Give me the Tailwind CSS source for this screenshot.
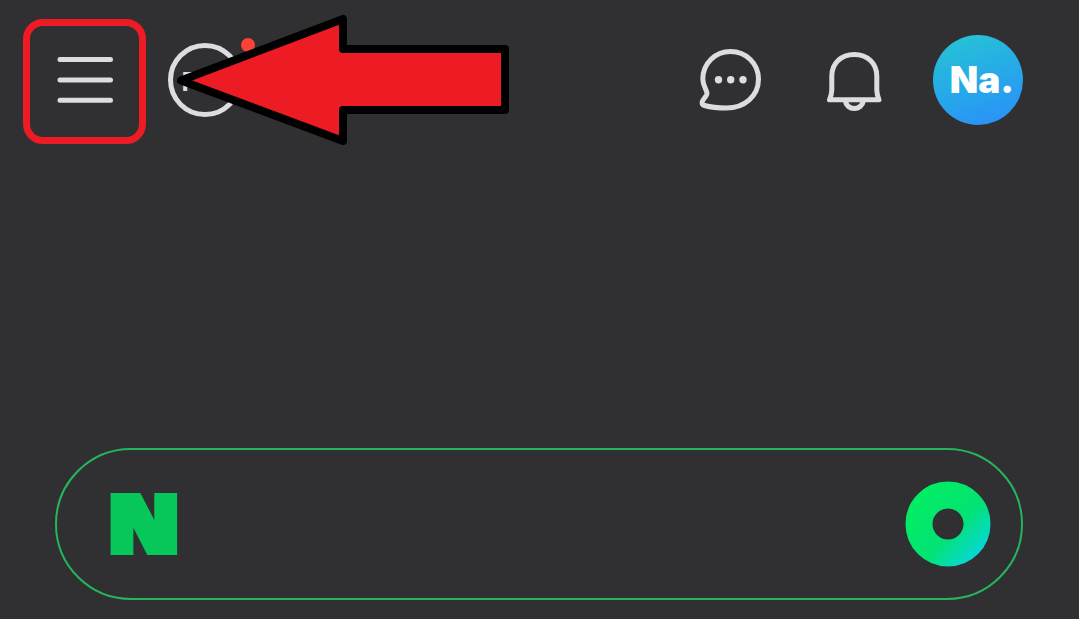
<!DOCTYPE html>
<html lang="ko">
<head>
    <meta charset="UTF-8">
    <meta name="viewport" content="width=device-width, initial-scale=1">
    <title>Naver</title>
    <script src="https://cdn.jsdelivr.net/npm/@tailwindcss/browser@4"></script>
</head>
<body class="min-h-screen bg-[#303032] text-[#dcdde0] font-[Inter,sans-serif]">
    <div class="relative flex flex-col">
        <!-- Header -->
        <header class="flex items-center justify-between pt-[19px] pl-[23px] pr-14">
            <div class="flex items-center gap-[22px]">
                <button type="button" aria-label="Menu" class="flex h-[125px] w-[123px] items-center justify-center rounded-[20px] border-7 border-[#ed1c24]">
                    <svg class="h-13 w-[58px]" viewBox="0 0 58 52" fill="none" stroke="currentColor" stroke-width="5" stroke-linecap="round">
                        <path d="M4 3.500 H54.500 M4 24 H54.500 M4 44.300 H54.500"></path>
                    </svg>
                </button>
                <button type="button" aria-label="Pay" class="relative mb-1 flex size-[74px] items-center justify-center rounded-full border-5 border-current">
                    <span class="pt-1 text-[26px] leading-8 font-bold">Pay</span>
                    <span class="absolute -top-2.5 -right-4.5 size-3.5 rounded-full bg-[#fc4237]"></span>
                </button>
            </div>

            <div class="flex items-center pb-1">
                <button type="button" aria-label="Talk" class="mr-16">
                    <svg class="size-16" viewBox="0 0 64 64" fill="none" stroke="currentColor" stroke-width="5" stroke-linejoin="round">
                        <path d="M32.500 3.500 C48 3.500 60.500 15.500 60.500 31 C60.500 48.500 46 60 28.500 60 C20 60 12 59 6.500 57.500 C4 56.800 3.500 55 4.500 53 C6 50 9 48 9 45.500 C9 42 4.800 38 4.800 31 C4.800 15.500 17 3.500 32.500 3.500 Z"></path>
                        <g fill="currentColor" stroke="none">
                            <circle cx="20.500" cy="31.700" r="3.700"></circle>
                            <circle cx="32.700" cy="31.700" r="3.700"></circle>
                            <circle cx="45" cy="31.700" r="3.700"></circle>
                        </g>
                    </svg>
                </button>
                <button type="button" aria-label="Notifications" class="mr-[51px]">
                    <svg class="h-16 w-14" viewBox="0 0 56 64" fill="none" stroke="currentColor" stroke-width="5" stroke-linejoin="round">
                        <path d="M28.300 6.500 C15 6.500 5.800 15.500 5.800 28 V42 C5.800 46 4.800 48.500 3.500 51.800 H53 C51.800 48.500 50.800 46 50.800 42 V28 C50.800 15.500 41.500 6.500 28.300 6.500 Z"></path>
                        <path d="M19 52 C20 58 24 60.500 28.300 60.500 C32.600 60.500 36.600 58 37.600 52"></path>
                    </svg>
                </button>
                <button type="button" aria-label="Na." class="flex size-[90px] items-center justify-center rounded-full bg-linear-160 from-[#29c5d2] to-[#2d8cfb] pl-2 text-[37px] leading-10 font-black text-white">Na.</button>
            </div>
        </header>

        <!-- Search -->
        <main class="mt-[304px] pr-14 pl-[55px]">
            <form class="flex h-[152px] items-center rounded-full border-2 border-[#25b55c] pr-[30px] pl-[51px]">
                <label for="query" class="mb-1 font-['Open_Sans',sans-serif] text-[86px] leading-[86px] font-extrabold text-[#07c75b] [text-shadow:4px_0_#07c75b,2px_0_#07c75b,-2px_0_#07c75b,-4px_0_#07c75b]">N</label>
                <input id="query" type="search" class="mx-6 h-16 min-w-0 flex-1 bg-transparent text-3xl outline-none">
                <button type="button" aria-label="Green dot" class="shrink-0">
                    <svg class="size-[86px]" viewBox="0 0 86 86" fill="none">
                        <defs>
                            <linearGradient id="ring" gradientUnits="userSpaceOnUse" x1="12" y1="10" x2="76" y2="72">
                                <stop offset="0" stop-color="#02ee62"></stop>
                                <stop offset="0.600" stop-color="#03e274"></stop>
                                <stop offset="1" stop-color="#06d8da"></stop>
                            </linearGradient>
                        </defs>
                        <circle cx="43" cy="43" r="29" stroke="url(#ring)" stroke-width="27"></circle>
                    </svg>
                </button>
            </form>
        </main>

        <!-- Pointer to the menu button -->
        <svg class="pointer-events-none absolute top-3 left-44 h-[136px] w-[336px]" viewBox="0 0 336 136" fill="#ed1c24" stroke="#000" stroke-width="8" stroke-linejoin="round" aria-hidden="true">
            <path d="M5 68.500 L167 7 V37 H329 V98 H167 V129 Z"></path>
        </svg>
    </div>
</body>
</html>
